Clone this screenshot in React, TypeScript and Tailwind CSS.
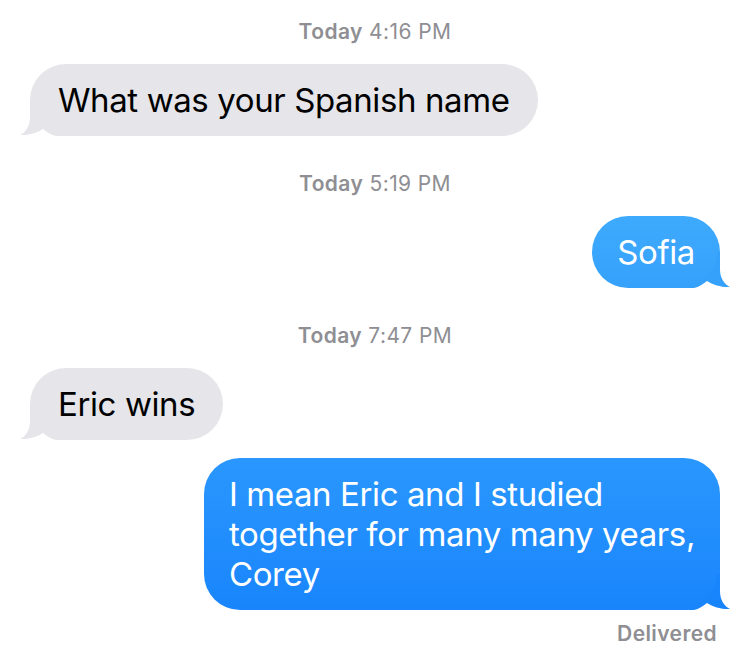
import React from 'react';

type Side = 'in' | 'out';

// bubble tail: fills the rounded bottom corner and sticks out 10px
const Tail: React.FC<{ side: Side; color: string }> = ({ side, color }) => (
  <svg
    width="46"
    height="36"
    viewBox="0 0 46 36"
    className={
      side === 'in'
        ? 'absolute left-[-10px] bottom-0'
        : 'absolute right-[-10px] bottom-0 -scale-x-100'
    }
  >
    <path
      d="M10 0 L10 17 C10 26 6 32 0 35 C8 35.5 17 33 23 29 C27 32 31 35 36 36 L46 36 L46 33 A33 33 0 0 1 13 0 Z"
      fill={color}
    />
  </svg>
);

const Stamp: React.FC<{ time: string }> = ({ time }) => (
  <div className="h-6 leading-6 text-center text-[21px] tracking-[0.4px] text-[#8e8e93]">
    <span className="font-semibold">Today</span> {time}
  </div>
);

const Bubble: React.FC<{ side: Side; light?: boolean; children: React.ReactNode }> = ({ side, light, children }) => {
  const incoming = side === 'in';
  let cls = 'relative rounded-[36px] py-4 ';
  let tail = '#e5e5ea';
  if (incoming) {
    cls += 'bg-[#e5e5ea] text-black px-[28px]';
  } else if (light) {
    cls += 'bg-gradient-to-b from-[#3eaafd] to-[#36a1fb] text-white px-[25px]';
    tail = '#36a1fb';
  } else {
    cls += 'bg-gradient-to-b from-[#2a97fe] to-[#1985fc] text-white px-[25px]';
    tail = '#1985fc';
  }
  return (
    <div className={incoming ? 'flex justify-start' : 'flex justify-end'}>
      <div className={cls}>
        <Tail side={side} color={tail} />
        <span className="relative block text-[33px] leading-[40px] tracking-[-0.4px]">{children}</span>
      </div>
    </div>
  );
};

export default function App() {
  return (
    <div
      className="w-[750px] h-[667px] bg-white overflow-hidden px-[30px] pt-5"
      style={{ fontFamily: 'Inter, "Liberation Sans", sans-serif' }}
    >
      {/* 4:16 */}
      <Stamp time="4:16 PM" />
      <div className="mt-5">
        <Bubble side="in">What was your Spanish name</Bubble>
      </div>

      {/* 5:19 */}
      <div className="mt-9">
        <Stamp time="5:19 PM" />
      </div>
      <div className="mt-5">
        <Bubble side="out" light>
          Sofia
        </Bubble>
      </div>

      {/* 7:47 */}
      <div className="mt-9">
        <Stamp time="7:47 PM" />
      </div>
      <div className="mt-5">
        <Bubble side="in">Eric wins</Bubble>
      </div>
      <div className="mt-[18px]">
        <Bubble side="out">
          I mean Eric and I studied
          <br />
          together for many many years,
          <br />
          Corey
        </Bubble>
      </div>
      <div className="mt-3 h-6 leading-6 text-right pr-[3px] text-[21px] tracking-[0.4px] font-semibold text-[#8e8e93]">
        Delivered
      </div>
    </div>
  );
}
